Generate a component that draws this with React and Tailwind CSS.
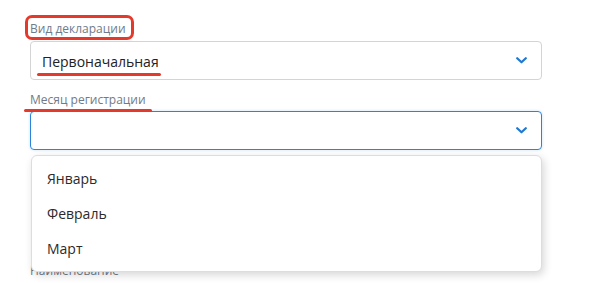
import { useState } from "react";

const Chevron = () => (
  <svg width="11" height="7" viewBox="0 0 11 7" className="shrink-0">
    <path d="M1.2 1.2 5.5 5.3 9.8 1.2" fill="none" stroke="#1f78d1" strokeWidth="2.2" strokeLinecap="round" strokeLinejoin="round" />
  </svg>
);

export default function App() {
  const [months] = useState(["Январь", "Февраль", "Март"]);

  return (
    <div className="min-h-[283px] bg-white font-['Open_Sans',sans-serif]">
      <div className="flex flex-col pt-[20px] pl-[30px] w-[542px]">
        {/* Вид декларации */}
        <div className="flex flex-col gap-[3px]">
          <label className="relative w-max h-[18px] text-[12px] leading-[18px] text-[#6f7b88]">
            <span className="absolute -left-[5px] -right-[8px] -top-[5px] -bottom-[2px] border-[3px] border-[#e33a2c] rounded-[7px]" />
            Вид декларации
          </label>
          <div className="flex items-center justify-between h-[39px] pl-[11px] pr-[14px] border border-[#d4d4d4] rounded-[4px]">
            <span className="relative text-[14px] leading-[20px] pt-[2px] text-[#222]">
              Первоначальная
              <span className="absolute -left-[5px] -right-[2px] bottom-[-4px] h-[3px] rounded-full bg-[#e33a2c]" />
            </span>
            <Chevron />
          </div>
        </div>

        {/* Месяц регистрации */}
        <div className="relative flex flex-col gap-[2px] mt-[11px]">
          <label className="relative w-max h-[18px] text-[12px] leading-[18px] text-[#6f7b88]">
            Месяц регистрации
            <span className="absolute -left-[6px] -right-[6px] bottom-[-3px] h-[3px] rounded-full bg-[#e33a2c]" />
          </label>
          <div className="flex items-center justify-end h-[39px] pr-[14px] border border-[#2a84dc] rounded-[4px] shadow-[0_0_3px_rgba(42,132,220,0.25)]">
            <Chevron />
          </div>

          <ul className="absolute z-10 left-[1px] right-0 top-[calc(100%+5px)] py-[5px] bg-white border border-[#dcdde0] rounded-[6px] shadow-[2px_3px_9px_rgba(0,0,0,0.16)]">
            {months.map((m) => (
              <li key={m} className="flex items-center h-[35px] pl-[15px] text-[14px] text-[#2b2b2b]">
                {m}
              </li>
            ))}
          </ul>
        </div>

        {/* Наименование */}
        <label className="mt-[112px] h-[18px] text-[12px] leading-[18px] text-[#6f7b88]">Наименование</label>
      </div>
    </div>
  );
}
